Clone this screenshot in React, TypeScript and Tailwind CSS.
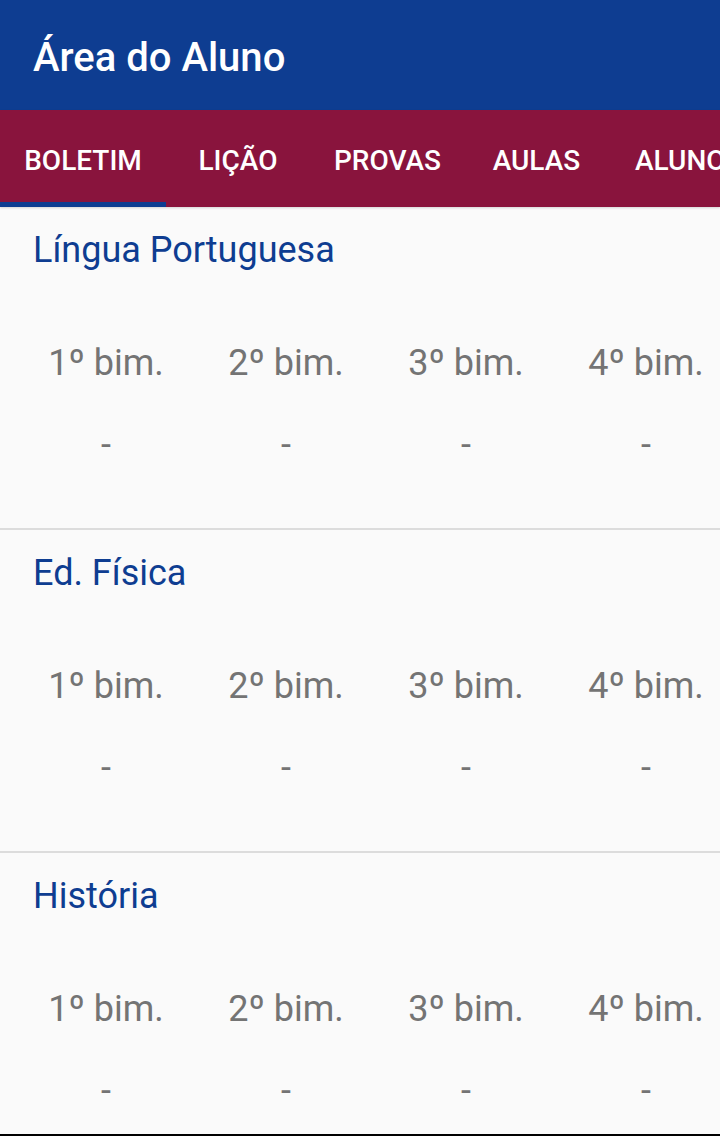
import React from "react";

const tabs = [
  { label: "BOLETIM", w: "w-[166px]", active: true },
  { label: "LIÇÃO", w: "w-[144px]", active: false },
  { label: "PROVAS", w: "w-[155px]", active: false },
  { label: "AULAS", w: "w-[143px]", active: false },
];

const subjects = ["Língua Portuguesa", "Ed. Física", "História"];
const bims = ["1º bim.", "2º bim.", "3º bim.", "4º bim."];

function Section({ name }: { name: string }) {
  return (
    <div className="h-[323px] shrink-0 border-b-2 border-[#dcdcdc] flex flex-col">
      <div className="pt-[22px] pl-[33px] text-[36px] leading-[42px] text-[#0e3d91]">{name}</div>
      <div className="mt-[71px] flex pl-[16px]">
        {bims.map((b) => (
          <div key={b} className="w-[180px] shrink-0 flex flex-col items-center">
            <div className="text-[36px] leading-[42px] text-[#747474] whitespace-nowrap">{b}</div>
            <div className="mt-[40px] text-[36px] leading-[42px] text-[#747474]">-</div>
          </div>
        ))}
      </div>
    </div>
  );
}

export default function App() {
  return (
    <div
      className="w-[720px] h-[1136px] overflow-hidden flex flex-col bg-[#fafafa]"
      style={{ fontFamily: "Roboto, 'Noto Sans', sans-serif" }}
    >
      <div className="h-[110px] shrink-0 bg-[#0e3d91] flex items-center pl-[33px] pt-[6px]">
        <span className="text-[40px] font-medium text-white leading-none">Área do Aluno</span>
      </div>
      <div className="h-[97px] shrink-0 bg-[#89143d] flex overflow-hidden shadow-[0_1px_2px_rgba(0,0,0,0.15)]">
        {tabs.map((t) => (
          <div key={t.label} className={`${t.w} shrink-0 relative flex items-center justify-center pt-[4px]`}>
            <span className="text-[28px] font-medium text-white leading-none">{t.label}</span>
            {t.active && <div className="absolute left-0 right-0 bottom-0 h-[5px] bg-[#0e3d91]" />}
          </div>
        ))}
        <div className="shrink-0 pl-[27px] flex items-center pt-[4px]">
          <span className="text-[28px] font-medium text-white leading-none whitespace-nowrap">ALUNOS</span>
        </div>
      </div>
      <div className="flex-1 overflow-hidden flex flex-col">
        {subjects.map((s) => (
          <Section key={s} name={s} />
        ))}
      </div>
      <div className="h-[2px] shrink-0 bg-black" />
    </div>
  );
}
